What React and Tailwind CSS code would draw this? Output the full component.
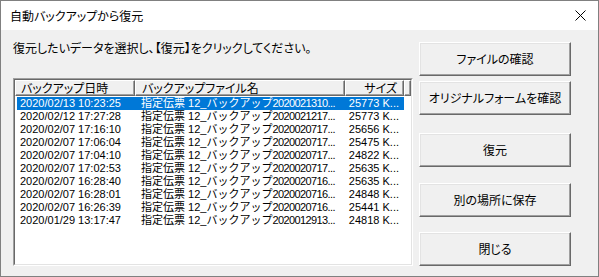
import React from 'react';

const rows = [
  ['2020/02/13 10:23:25', '2020021310', '25773'],
  ['2020/02/12 17:27:28', '2020021217', '25773'],
  ['2020/02/07 17:16:10', '2020020717', '25656'],
  ['2020/02/07 17:06:04', '2020020717', '25475'],
  ['2020/02/07 17:04:10', '2020020717', '24822'],
  ['2020/02/07 17:02:53', '2020020717', '25635'],
  ['2020/02/07 16:28:40', '2020020716', '25635'],
  ['2020/02/07 16:28:01', '2020020716', '24848'],
  ['2020/02/07 16:26:39', '2020020716', '25441'],
  ['2020/01/29 13:17:47', '2020012913', '24818'],
];

const uiFont = "font-['Noto_Sans_CJK_JP',sans-serif] [font-feature-settings:'palt']";

const WinButton = ({ children, className = '' }) => (
  <button
    className={`w-[152px] h-[34px] bg-[#f0f0f0] border-t border-l border-white border-r border-b border-r-[#696969] border-b-[#696969] shadow-[inset_-1px_-1px_0_#a0a0a0,inset_1px_1px_0_#e3e3e3] text-[12px] leading-[14px] text-black ${uiFont} ${className}`}
  >
    {children}
  </button>
);

const HeaderCell = ({ children, className = '' }) => (
  <div
    className={`h-[16px] shrink-0 bg-[#f0f0f0] border-t border-l border-white border-r border-b border-r-[#696969] border-b-[#696969] shadow-[inset_-1px_-1px_0_#a0a0a0] text-[12px] leading-[13px] text-black whitespace-nowrap overflow-hidden ${uiFont} ${className}`}
  >
    {children}
  </div>
);

export default function App() {
  return (
    <div className="w-[599px] h-[277px] border border-[#808080] bg-[#f0f0f0] flex flex-col overflow-hidden text-black">
      {/* title bar */}
      <div className="h-[29px] shrink-0 bg-white flex items-center justify-between pl-[9px] pr-[11px]">
        <span className={`text-[12px] leading-[14px] ${uiFont}`}>自動バックアップから復元</span>
        <svg width="11" height="11" viewBox="0 0 11 11" className="mr-[1px]">
          <path d="M0.5 0.5 L10.5 10.5 M10.5 0.5 L0.5 10.5" stroke="#000" strokeWidth="1" fill="none" />
        </svg>
      </div>

      <div className="flex flex-1 pl-[12px]">
        {/* left side */}
        <div className="flex flex-col w-[400px]">
          <p className={`mt-[11px] h-[14px] text-[12px] leading-[14px] whitespace-nowrap ${uiFont}`}>
            復元したいデータを選択し、【復元】をクリックしてください。
          </p>

          <div className="mt-[23px] h-[188px] border-t border-l border-[#a0a0a0] border-b border-r border-b-white border-r-white">
            <div className="h-full border-t border-l border-[#696969] border-b border-r border-b-[#e3e3e3] border-r-[#e3e3e3] bg-white flex flex-col">
              <div className="flex">
                <HeaderCell className="w-[120px] pl-[5px]">バックアップ日時</HeaderCell>
                <HeaderCell className="w-[210px] pl-[6px]">バックアップファイル名</HeaderCell>
                <HeaderCell className="w-[59px] text-right pr-[6px]">サイズ</HeaderCell>
                <HeaderCell className="w-[7px]" />
              </div>

              <div className="mt-[1px] pl-[2px] flex flex-col font-['Liberation_Sans','Noto_Sans_CJK_JP',sans-serif] text-[11px] leading-[13px]">
                {rows.map(([date, stamp, size], i) => (
                  <div
                    key={i}
                    className={`flex h-[13px] w-[387px] whitespace-nowrap ${i === 0 ? 'bg-[#0078d7] text-white' : 'text-black'}`}
                  >
                    <span className="w-[118px] pl-[3px] overflow-hidden">{date}</span>
                    <span className="w-[210px] pl-[6px] overflow-hidden">
                      指定伝票 12_バックアップ<span className="tracking-[-0.6px]">{stamp}...</span>
                    </span>
                    <span className="w-[59px] pr-[5px] text-right overflow-hidden">{size} K...</span>
                  </div>
                ))}
              </div>
            </div>
          </div>
        </div>

        {/* buttons */}
        <div className="ml-[6px] flex flex-col">
          <WinButton className="mt-[12px]">ファイルの確認</WinButton>
          <WinButton className="mt-[5px]">オリジナルフォームを確認</WinButton>
          <WinButton className="mt-[18px]">復元</WinButton>
          <WinButton className="mt-[16px]">別の場所に保存</WinButton>
          <WinButton className="mt-[15px]">閉じる</WinButton>
        </div>
      </div>
    </div>
  );
}
